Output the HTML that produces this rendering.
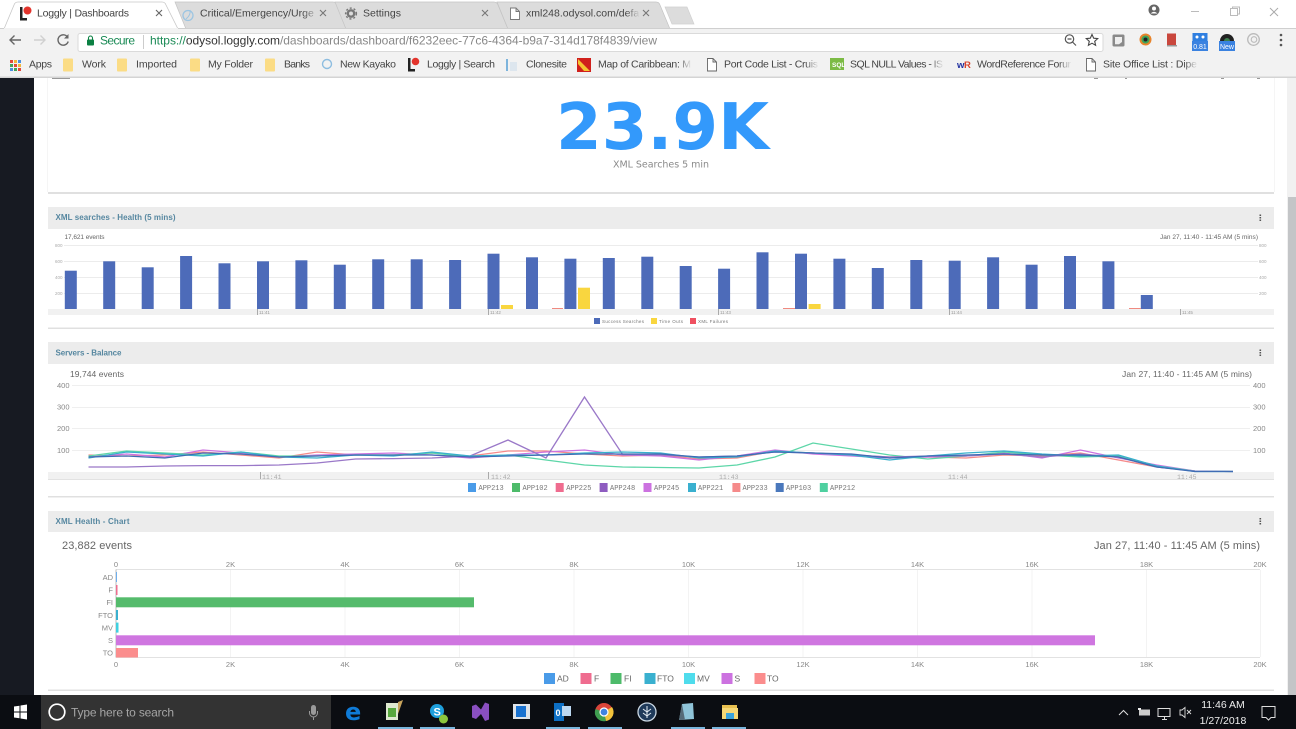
<!DOCTYPE html>
<html><head><meta charset="utf-8"><title>Loggly | Dashboards</title>
<style>
html,body{margin:0;padding:0;background:#fff;width:1296px;height:729px;overflow:hidden}
svg{display:block;filter:blur(.35px)}
text{font-family:"Liberation Sans",sans-serif}
.b text{font-size:10.5px;fill:#444}
.t{font-size:10.5px;fill:#444}
.h{font-size:8px;fill:#5687a0;font-weight:bold}
.s{font-size:6.5px;fill:#aaa;font-family:"Liberation Mono",monospace}
.m{font-size:7px;fill:#777;font-family:"Liberation Mono",monospace}
.a{font-size:7.5px;fill:#888}
.u{font-size:12px}
.l{fill:none;stroke-width:1.300}
</style></head><body>
<svg xmlns="http://www.w3.org/2000/svg" width="1296" height="729" viewBox="0 0 1296 729">
<defs>
<linearGradient id="fade" x1="0" x2="1"><stop offset="0" stop-color="#dcdcdc" stop-opacity="0"/><stop offset="1" stop-color="#dcdcdc"/></linearGradient>
<linearGradient id="fadew" x1="0" x2="1"><stop offset="0" stop-color="#f2f2f2" stop-opacity="0"/><stop offset="1" stop-color="#f2f2f2"/></linearGradient>
</defs>
<rect width="1296" height="729" fill="#fff"/>

<!-- page -->
<rect x="0" y="78" width="34" height="617" fill="#171a22"/>
<rect x="1287" y="78" width="9" height="617" fill="#f1f1f1"/>
<rect x="1288" y="197" width="8" height="498" fill="#c3c5c7"/>

<!-- card 1 -->
<rect x="48" y="192" width="1226" height="2" fill="#e0e0e0"/>
<line x1="47.500" y1="78" x2="47.500" y2="192" stroke="#f5f5f5"/>
<line x1="1274.500" y1="78" x2="1274.500" y2="192" stroke="#f5f5f5"/>
<g fill="#999"><rect x="52" y="78" width="18" height="1"/><rect x="1094" y="78" width="4" height="1"/><rect x="1125" y="78" width="2" height="1"/><rect x="1221" y="78" width="3" height="1"/><rect x="1257" y="78" width="3" height="1"/></g>
<text x="662.500" y="149" text-anchor="middle" style="font-family:'DejaVu Sans',sans-serif;font-weight:bold;font-size:64px" fill="#3399fb" textLength="213" lengthAdjust="spacingAndGlyphs">23.9K</text>
<text x="661" y="167.500" text-anchor="middle" style="font-family:'DejaVu Sans',sans-serif;font-size:9.500px" fill="#8a8a8a" textLength="96">XML Searches 5 min</text>

<!-- card 2 -->
<rect x="48" y="207" width="1226" height="22" fill="#ececec"/>
<rect x="48" y="327.500" width="1226" height="1.500" fill="#e0e0e0"/>
<text x="55.500" y="220" class="h" textLength="120">XML searches - Health (5 mins)</text>
<rect x="1259.500" y="214.500" width="1.600" height="1.500" fill="#555"/><rect x="1259.500" y="217" width="1.600" height="1.500" fill="#555"/><rect x="1259.500" y="219.500" width="1.600" height="1.500" fill="#555"/>
<text x="64.500" y="239" style="font-size:6.500px" fill="#666" textLength="40">17,621 events</text>
<text x="1160" y="239" style="font-size:6.500px" fill="#666" textLength="98">Jan 27, 11:40 - 11:45 AM  (5 mins)</text>
<g stroke="#ececec"><line x1="64" y1="245.500" x2="1258" y2="245.500"/><line x1="64" y1="261.500" x2="1258" y2="261.500"/><line x1="64" y1="277.500" x2="1258" y2="277.500"/><line x1="64" y1="293.500" x2="1258" y2="293.500"/></g>
<g fill="#aaa">
<text x="55" y="247" style="font-size:4.500px">800</text><text x="55" y="263" style="font-size:4.500px">600</text><text x="55" y="279" style="font-size:4.500px">400</text><text x="55" y="295" style="font-size:4.500px">200</text>
<text x="1259" y="247" style="font-size:4.500px">800</text><text x="1259" y="263" style="font-size:4.500px">600</text><text x="1259" y="279" style="font-size:4.500px">400</text><text x="1259" y="295" style="font-size:4.500px">200</text>
</g>
<rect x="48" y="309" width="1226" height="6" fill="#f1f1f1"/>
<g stroke="#aaa"><line x1="257.500" y1="309" x2="257.500" y2="315"/><line x1="488.500" y1="309" x2="488.500" y2="315"/><line x1="718.500" y1="309" x2="718.500" y2="315"/><line x1="949.500" y1="309" x2="949.500" y2="315"/><line x1="1180.500" y1="309" x2="1180.500" y2="315"/></g>
<g fill="#999"><text x="259" y="314" style="font-size:4.500px">11:41</text><text x="490" y="314" style="font-size:4.500px">11:42</text><text x="720" y="314" style="font-size:4.500px">11:43</text><text x="951" y="314" style="font-size:4.500px">11:44</text><text x="1182" y="314" style="font-size:4.500px">11:45</text></g>
<g fill="#4d6bb9">
<rect x="64.800" y="270.700" width="12" height="38.300"/><rect x="103.200" y="261.300" width="12" height="47.700"/><rect x="141.700" y="267.300" width="12" height="41.700"/><rect x="180.100" y="256" width="12" height="53"/><rect x="218.500" y="263.300" width="12" height="45.700"/><rect x="257" y="261.300" width="12" height="47.700"/><rect x="295.400" y="260.300" width="12" height="48.700"/><rect x="333.800" y="264.700" width="12" height="44.300"/><rect x="372.200" y="259.300" width="12" height="49.700"/><rect x="410.700" y="259.300" width="12" height="49.700"/><rect x="449.100" y="260" width="12" height="49"/><rect x="487.500" y="253.700" width="12" height="55.300"/><rect x="526" y="257.300" width="12" height="51.700"/><rect x="564.400" y="258.700" width="12" height="50.300"/><rect x="602.800" y="258" width="12" height="51"/><rect x="641.300" y="256.700" width="12" height="52.300"/><rect x="679.700" y="266" width="12" height="43"/><rect x="718.100" y="268.700" width="12" height="40.300"/><rect x="756.500" y="252.300" width="12" height="56.700"/><rect x="795" y="253.700" width="12" height="55.300"/><rect x="833.400" y="258.700" width="12" height="50.300"/><rect x="871.800" y="268" width="12" height="41"/><rect x="910.300" y="260" width="12" height="49"/><rect x="948.700" y="260.700" width="12" height="48.300"/><rect x="987.100" y="257.300" width="12" height="51.700"/><rect x="1025.600" y="264.700" width="12" height="44.300"/><rect x="1064" y="256" width="12" height="53"/><rect x="1102.400" y="261.300" width="12" height="47.700"/><rect x="1140.800" y="295" width="12" height="14"/>
</g>
<g fill="#f9d63f"><rect x="501" y="305" width="12" height="4"/><rect x="578" y="287.700" width="12" height="21.300"/><rect x="808.600" y="304" width="12" height="5"/></g>
<g fill="#f08a80"><rect x="552" y="308" width="11" height="1"/><rect x="783" y="308" width="12" height="1"/><rect x="1129" y="308" width="12" height="1"/></g>
<rect x="594" y="318" width="6" height="6" fill="#4d6bb9"/><text x="602" y="323" style="font-size:4.500px" fill="#777" textLength="42">Success Searches</text>
<rect x="651" y="318" width="6" height="6" fill="#f9d63f"/><text x="659" y="323" style="font-size:4.500px" fill="#777" textLength="24">Time Outs</text>
<rect x="690" y="318" width="6" height="6" fill="#ef5060"/><text x="698" y="323" style="font-size:4.500px" fill="#777" textLength="30">XML Failures</text>

<!-- card 3 -->
<rect x="48" y="342" width="1226" height="22" fill="#ececec"/>
<rect x="48" y="496" width="1226" height="1.500" fill="#e0e0e0"/>
<text x="55.500" y="355.500" class="h" textLength="66">Servers - Balance</text>
<rect x="1259.500" y="349.500" width="1.600" height="1.500" fill="#555"/><rect x="1259.500" y="352" width="1.600" height="1.500" fill="#555"/><rect x="1259.500" y="354.500" width="1.600" height="1.500" fill="#555"/>
<text x="70" y="377" style="font-size:8.500px" fill="#666" textLength="54">19,744 events</text>
<text x="1122" y="377" style="font-size:8.500px" fill="#666" textLength="130">Jan 27, 11:40 - 11:45 AM  (5 mins)</text>
<g stroke="#efefef"><line x1="72" y1="385.500" x2="1250" y2="385.500"/><line x1="72" y1="407.500" x2="1250" y2="407.500"/><line x1="72" y1="428.500" x2="1250" y2="428.500"/><line x1="72" y1="450.500" x2="1250" y2="450.500"/></g>
<g><text x="57" y="388" class="a">400</text><text x="57" y="409.500" class="a">300</text><text x="57" y="431" class="a">200</text><text x="57" y="453" class="a">100</text>
<text x="1253" y="388" class="a">400</text><text x="1253" y="409.500" class="a">300</text><text x="1253" y="431" class="a">200</text><text x="1253" y="453" class="a">100</text></g>
<rect x="48" y="472" width="1226" height="7.500" fill="#f1f1f1"/>
<g stroke="#aaa"><line x1="260.500" y1="472" x2="260.500" y2="480"/><line x1="488.500" y1="472" x2="488.500" y2="480"/></g>
<g><text x="262" y="479" class="s">11:41</text><text x="491" y="479" class="s">11:42</text><text x="719" y="479" class="s">11:43</text><text x="948" y="479" class="s">11:44</text><text x="1177" y="479" class="s">11:45</text></g>
<line x1="48" y1="479.500" x2="1274" y2="479.500" stroke="#e2e2e2"/>

<polyline class="l" stroke="#f58a8a" points="88.500,455 126.600,456 164.800,455 203,452 241,455 279,458 317,452 355.500,455 393.700,455 432,453 470,456 508,451 546,451 584.500,454 622.600,456 660.700,455 699,459 737,458 775,451 813,453 851.500,455 889.600,457 927.800,457 966,458 1004,455 1042,456 1080.400,453 1118.500,460 1156.700,467 1194.800,471 1233,471.500"/>
<polyline class="l" stroke="#cc72e0" points="88.500,457 126.600,454 164.800,457 203,450 241,453 279,457 317,455 355.500,454 393.700,453 432,455 470,458 508,455 546,452 584.500,450 622.600,455 660.700,456 699,460 737,456 775,450 813,454 851.500,456 889.600,458 927.800,457 966,456 1004,453 1042,458 1080.400,450 1118.500,458 1156.700,465 1194.800,471 1233,471.500"/>
<polyline class="l" stroke="#5dd6a8" points="88.500,456 126.600,451 164.800,453 203,455 241,452 279,456 317,456 355.500,455 393.700,455 432,453 470,457 508,455 546,460 584.500,465 622.600,467 660.700,467.500 699,468 737,465 775,457 813,443 851.500,449 889.600,455 927.800,459 966,456 1004,452 1042,455 1080.400,457 1118.500,456 1156.700,466 1194.800,471 1233,471.500"/>
<polyline class="l" stroke="#9a78c8" points="88.500,467 126.600,467 164.800,466 203,465.600 241,465.600 279,465 317,463 355.500,459 393.700,458.600 432,458 470,456 508,440 546,458 584.500,397 622.600,454.500 660.700,455 699,457 737,456 775,452 813,453 851.500,455 889.600,457 927.800,456 966,456 1004,454 1042,457 1080.400,454 1118.500,457 1156.700,467 1194.800,471 1233,471.500"/>
<polyline class="l" stroke="#38b0cc" points="88.500,458 126.600,452 164.800,454 203,456 241,452 279,457 317,458 355.500,455 393.700,456 432,452 470,456 508,455 546,455 584.500,453 622.600,452 660.700,453 699,458 737,457 775,451 813,453 851.500,455 889.600,460 927.800,456 966,453 1004,451 1042,454 1080.400,456 1118.500,455 1156.700,466 1194.800,471.500 1233,471.500"/>
<polyline class="l" stroke="#3f6cb4" points="88.500,457 126.600,456 164.800,458 203,453 241,454 279,457 317,456 355.500,455 393.700,455 432,455 470,457 508,456 546,455 584.500,454 622.600,454 660.700,454 699,457 737,456 775,452 813,453 851.500,454 889.600,458 927.800,456 966,455 1004,454 1042,455 1080.400,455 1118.500,457 1156.700,467 1194.800,471.500 1233,471.500"/>

<g>
<rect x="468" y="483" width="8" height="9" fill="#4a9be8"/><text x="478.500" y="490" class="m">APP213</text>
<rect x="512" y="483" width="8" height="9" fill="#4dbb6a"/><text x="522.500" y="490" class="m">APP102</text>
<rect x="555.700" y="483" width="8" height="9" fill="#ef6c8f"/><text x="566.200" y="490" class="m">APP225</text>
<rect x="599.600" y="483" width="8" height="9" fill="#8e5cc0"/><text x="610" y="490" class="m">APP248</text>
<rect x="643.500" y="483" width="8" height="9" fill="#cc72e0"/><text x="654" y="490" class="m">APP245</text>
<rect x="688" y="483" width="8" height="9" fill="#3ab0cf"/><text x="698" y="490" class="m">APP221</text>
<rect x="732.400" y="483" width="8" height="9" fill="#f58a8a"/><text x="742.500" y="490" class="m">APP233</text>
<rect x="775.700" y="483" width="8" height="9" fill="#4a78bc"/><text x="786" y="490" class="m">APP103</text>
<rect x="819.800" y="483" width="8" height="9" fill="#4fd0a0"/><text x="830" y="490" class="m">APP212</text>
</g>

<!-- card 4 -->
<rect x="48" y="511" width="1226" height="21" fill="#ececec"/>
<rect x="48" y="689.500" width="1226" height="1.500" fill="#e0e0e0"/>
<text x="55.500" y="524" class="h" textLength="74">XML Health - Chart</text>
<rect x="1259.500" y="518" width="1.600" height="1.500" fill="#555"/><rect x="1259.500" y="520.500" width="1.600" height="1.500" fill="#555"/><rect x="1259.500" y="523" width="1.600" height="1.500" fill="#555"/>
<text x="62" y="549" style="font-size:11px" fill="#666" textLength="70">23,882 events</text>
<text x="1094" y="549" style="font-size:11px" fill="#666" textLength="166">Jan 27, 11:40 - 11:45 AM  (5 mins)</text>
<g stroke="#f3f3f3"><line x1="230.500" y1="570" x2="230.500" y2="657"/><line x1="345" y1="570" x2="345" y2="657"/><line x1="459.500" y1="570" x2="459.500" y2="657"/><line x1="574" y1="570" x2="574" y2="657"/><line x1="688.500" y1="570" x2="688.500" y2="657"/><line x1="803" y1="570" x2="803" y2="657"/><line x1="917.500" y1="570" x2="917.500" y2="657"/><line x1="1032" y1="570" x2="1032" y2="657"/><line x1="1146.500" y1="570" x2="1146.500" y2="657"/><line x1="1260.500" y1="570" x2="1260.500" y2="657"/></g>
<line x1="116" y1="569.500" x2="1260" y2="569.500" stroke="#e2e2e2"/>
<line x1="116" y1="657.500" x2="1260" y2="657.500" stroke="#e2e2e2"/>
<line x1="116" y1="569.500" x2="116" y2="657.500" stroke="#bbb"/>
<g>
<text x="116" y="567" class="a" text-anchor="middle">0</text><text x="230.500" y="567" class="a" text-anchor="middle">2K</text><text x="345" y="567" class="a" text-anchor="middle">4K</text><text x="459.500" y="567" class="a" text-anchor="middle">6K</text><text x="574" y="567" class="a" text-anchor="middle">8K</text><text x="688.500" y="567" class="a" text-anchor="middle">10K</text><text x="803" y="567" class="a" text-anchor="middle">12K</text><text x="917.500" y="567" class="a" text-anchor="middle">14K</text><text x="1032" y="567" class="a" text-anchor="middle">16K</text><text x="1146.500" y="567" class="a" text-anchor="middle">18K</text><text x="1260" y="567" class="a" text-anchor="middle">20K</text>
<text x="116" y="667" class="a" text-anchor="middle">0</text><text x="230.500" y="667" class="a" text-anchor="middle">2K</text><text x="345" y="667" class="a" text-anchor="middle">4K</text><text x="459.500" y="667" class="a" text-anchor="middle">6K</text><text x="574" y="667" class="a" text-anchor="middle">8K</text><text x="688.500" y="667" class="a" text-anchor="middle">10K</text><text x="803" y="667" class="a" text-anchor="middle">12K</text><text x="917.500" y="667" class="a" text-anchor="middle">14K</text><text x="1032" y="667" class="a" text-anchor="middle">16K</text><text x="1146.500" y="667" class="a" text-anchor="middle">18K</text><text x="1260" y="667" class="a" text-anchor="middle">20K</text>
</g>
<text x="113" y="580" class="a" text-anchor="end">AD</text><text x="113" y="592.500" class="a" text-anchor="end">F</text><text x="113" y="605" class="a" text-anchor="end">FI</text><text x="113" y="618" class="a" text-anchor="end">FTO</text><text x="113" y="630.500" class="a" text-anchor="end">MV</text><text x="113" y="643" class="a" text-anchor="end">S</text><text x="113" y="655.500" class="a" text-anchor="end">TO</text>
<rect x="116" y="572" width="0.800" height="10" fill="#4a9be8"/>
<rect x="116" y="585" width="1.500" height="10" fill="#ef6c8f"/>
<rect x="116" y="597.300" width="358" height="10" fill="#55bb6c"/>
<rect x="116" y="610" width="2" height="10" fill="#3ab0cf"/>
<rect x="116" y="622.600" width="2.500" height="10" fill="#3fd0e0"/>
<rect x="116" y="635.300" width="979" height="10" fill="#cf76e0"/>
<rect x="116" y="648" width="22" height="9.500" fill="#fb8d8d"/>
<rect x="544" y="673" width="11" height="11" fill="#4a9be8"/><text x="557" y="681.500" style="font-size:8.500px" fill="#666">AD</text>
<rect x="580.500" y="673" width="11" height="11" fill="#ef6c8f"/><text x="594" y="681.500" style="font-size:8.500px" fill="#666">F</text>
<rect x="610.500" y="673" width="11" height="11" fill="#4dbb6a"/><text x="624" y="681.500" style="font-size:8.500px" fill="#666">FI</text>
<rect x="644.500" y="673" width="11" height="11" fill="#3ab0cf"/><text x="657" y="681.500" style="font-size:8.500px" fill="#666">FTO</text>
<rect x="684" y="673" width="11" height="11" fill="#4fdcec"/><text x="697" y="681.500" style="font-size:8.500px" fill="#666">MV</text>
<rect x="721.500" y="673" width="11" height="11" fill="#cc72e0"/><text x="734.500" y="681.500" style="font-size:8.500px" fill="#666">S</text>
<rect x="754.500" y="673" width="11" height="11" fill="#fb8d8d"/><text x="767" y="681.500" style="font-size:8.500px" fill="#666">TO</text>

<!-- chrome -->
<rect x="0" y="0" width="1296" height="28" fill="#fff"/>
<path d="M175 2 L333 2 Q336 2 337 5 L347 29 L186 29Z" fill="#dcdcdc" stroke="#c4c4c4" stroke-width=".7"/>
<path d="M335 2 L494 2 Q497 2 498 5 L508 29 L346 29Z" fill="#dcdcdc" stroke="#c4c4c4" stroke-width=".7"/>
<path d="M497 2 L656 2 Q659 2 660 5 L670 29 L508 29Z" fill="#dcdcdc" stroke="#c4c4c4" stroke-width=".7"/>
<path d="M665 7 L687 7 L694 24 L672 24Z" fill="#dcdcdc" stroke="#d0d0d0" stroke-width=".7"/>
<path d="M4 29 L14 5 Q15 2 18 2 L162 2 Q165 2 166 5 L178 29Z" fill="#fff" stroke="#c8c8c8" stroke-width=".8"/>
<rect x="0" y="28" width="1296" height="50" fill="#f2f2f2"/>
<rect x="178" y="28" width="1118" height="1" fill="#cfcfcf"/>
<rect x="0" y="28" width="4" height="1" fill="#cfcfcf"/>
<rect x="0" y="76.500" width="1296" height="1.500" fill="#d4d4d4"/>

<!-- tab content -->
<rect x="20" y="7" width="2.500" height="13" fill="#222"/><rect x="20" y="18" width="7" height="2.500" fill="#222"/><circle cx="27.500" cy="10.500" r="4" fill="#e3342c"/>
<text x="37" y="16.500" class="t" textLength="92">Loggly | Dashboards</text>
<path d="M156 10 l6 6 m0 -6 l-6 6" stroke="#666" stroke-width="1.100"/>
<circle cx="188" cy="15.500" r="5" fill="none" stroke="#9cc5e2" stroke-width="1.300"/><path d="M186 19 Q191 15 190 10" fill="none" stroke="#9cc5e2"/>
<text x="200" y="16.500" class="t" fill="#555">Critical/Emergency/Urge</text>
<rect x="302" y="5" width="18" height="18" fill="url(#fade)"/>
<path d="M320 10 l6 6 m0 -6 l-6 6" stroke="#777" stroke-width="1.100"/>
<circle cx="351" cy="13.500" r="3.200" fill="none" stroke="#777" stroke-width="2.400"/><circle cx="351" cy="13.500" r="5.400" fill="none" stroke="#777" stroke-width="1.400" stroke-dasharray="2 2"/>
<text x="363" y="16.500" class="t" fill="#555">Settings</text>
<path d="M482 10 l6 6 m0 -6 l-6 6" stroke="#777" stroke-width="1.100"/>
<path d="M510.500 8 h5.500 l3.500 3.500 v8 h-9z M516 8 v3.500 h3.500" fill="#fff" stroke="#777" stroke-width=".9"/>
<text x="526" y="16.500" class="t" fill="#555">xml248.odysol.com/defa</text>
<rect x="626" y="5" width="14" height="18" fill="url(#fade)"/>
<path d="M643 10 l6 6 m0 -6 l-6 6" stroke="#777" stroke-width="1.100"/>

<!-- window controls -->
<circle cx="1154" cy="10" r="5.500" fill="#666"/><circle cx="1154" cy="8.500" r="2" fill="#fff"/><path d="M1150.500 13.500 q3.500 -3.500 7 0" fill="#fff"/>
<line x1="1191" y1="11.500" x2="1199" y2="11.500" stroke="#bbb"/>
<rect x="1230.500" y="8.500" width="7" height="7" fill="none" stroke="#bbb"/><path d="M1232.500 8.500 v-1.500 h7 v7 h-2" fill="none" stroke="#bbb"/>
<path d="M1270 8 l8 8 m0 -8 l-8 8" stroke="#aaa"/>

<!-- toolbar -->
<path d="M21 40 H10 M14.500 35.500 L10 40 L14.500 44.500" fill="none" stroke="#666" stroke-width="1.400"/>
<path d="M34 40 H45 M40.500 35.500 L45 40 L40.500 44.500" fill="none" stroke="#d0d0d0" stroke-width="1.400"/>
<path d="M67.500 37 A5.200 5.200 0 1 0 68.200 41.500" fill="none" stroke="#666" stroke-width="1.400"/><path d="M68.500 34 v4.500 h-4.500z" fill="#666"/>
<rect x="78" y="33.500" width="1025" height="18" rx="2" fill="#fff" stroke="#dadada"/>
<rect x="87" y="39.500" width="7" height="6" rx="1" fill="#0b8043"/><path d="M88.500 39.500 v-1.500 a2 2 0 0 1 4 0 v1.500" fill="none" stroke="#0b8043" stroke-width="1.100"/>
<text x="100" y="44.500" class="u" fill="#1a8a55" textLength="35">Secure</text>
<line x1="143.500" y1="35" x2="143.500" y2="49" stroke="#ccc"/>
<text x="150" y="44.500" class="u" textLength="507"><tspan fill="#1a8a55">https://</tspan><tspan fill="#333">odysol.loggly.com</tspan><tspan fill="#888">/dashboards/dashboard/f6232eec-77c6-4364-b9a7-314d178f4839/view</tspan></text>
<circle cx="1069.500" cy="39" r="4.200" fill="none" stroke="#555" stroke-width="1.200"/><path d="M1072.500 42 l3.500 3.500 M1067.500 39 h4" stroke="#555" stroke-width="1.200"/>
<path d="M1092 34.500 l1.700 3.700 4 .4 -3 2.700 .9 4 -3.600 -2.100 -3.600 2.100 .9 -4 -3 -2.700 4 -.4z" fill="#fff" stroke="#444" stroke-width="1.100"/>
<rect x="1112.500" y="34.500" width="12" height="12" rx="1.500" fill="#8a8a8a"/><path d="M1115 37 h7 v5 l-3 2.200 h-4z" fill="#efefef"/>
<circle cx="1145.500" cy="39.500" r="6" fill="#e8842c"/><circle cx="1145.500" cy="39.500" r="4" fill="#3da55a"/><circle cx="1145.500" cy="39.500" r="2" fill="#222"/>
<rect x="1167" y="33.500" width="9" height="12" fill="#c9473d"/><rect x="1167" y="45" width="10" height="1.500" fill="#999"/>
<rect x="1192.500" y="33" width="15" height="8" fill="#2f7fe0"/><circle cx="1197" cy="37" r="1.500" fill="#fff"/><circle cx="1203" cy="37" r="1.500" fill="#fff"/>
<rect x="1192" y="41" width="16" height="10" fill="#3a82e0"/><text x="1200" y="49" text-anchor="middle" style="font-size:7px" fill="#fff">0.81</text>
<path d="M1220 41 a7 7 0 0 1 14 0z" fill="#222"/><path d="M1224 41 a3 3 0 0 1 6 0z" fill="#3d7f4f"/>
<rect x="1219" y="41" width="16" height="10" fill="#3a82e0"/><text x="1227" y="49" text-anchor="middle" style="font-size:7px" fill="#fff">New</text>
<circle cx="1253.500" cy="39.500" r="5.800" fill="none" stroke="#bbb" stroke-width="1.300"/><circle cx="1254" cy="39.500" r="2.800" fill="none" stroke="#bbb" stroke-width="1.100"/>
<circle cx="1281" cy="35" r="1.300" fill="#555"/><circle cx="1281" cy="40" r="1.300" fill="#555"/><circle cx="1281" cy="45" r="1.300" fill="#555"/>

<!-- bookmarks -->
<rect x="10" y="60" width="3" height="3" fill="#e1483a"/><rect x="14" y="60" width="3" height="3" fill="#f1b73c"/><rect x="18" y="60" width="3" height="3" fill="#4a8fe0"/>
<rect x="10" y="64" width="3" height="3" fill="#44a35a"/><rect x="14" y="64" width="3" height="3" fill="#e1483a"/><rect x="18" y="64" width="3" height="3" fill="#f1b73c"/>
<rect x="10" y="68" width="3" height="3" fill="#4a8fe0"/><rect x="14" y="68" width="3" height="3" fill="#44a35a"/><rect x="18" y="68" width="3" height="3" fill="#e1483a"/>
<g fill="#fbdc85"><rect x="63" y="58.500" width="10" height="13" rx="1"/><rect x="117" y="58.500" width="10" height="13" rx="1"/><rect x="190" y="58.500" width="10" height="13" rx="1"/><rect x="265" y="58.500" width="10" height="13" rx="1"/></g>
<circle cx="327" cy="64" r="4.500" fill="none" stroke="#8dbde0" stroke-width="1.400"/>
<rect x="408" y="58" width="2.500" height="13" fill="#222"/><rect x="408" y="69" width="7" height="2.500" fill="#222"/><circle cx="415.500" cy="61.500" r="3.800" fill="#e3342c"/>
<rect x="506" y="59" width="2" height="12" fill="#7db4dc"/><rect x="510" y="62" width="7" height="9" fill="#dde6ee"/>
<rect x="577" y="58" width="14" height="14" fill="#d0201c"/><path d="M578 59 l12 12 h-6 l-6 -7z" fill="#f4c430"/>
<path d="M707.500 58.500 h5.500 l3.500 3.500 v9 h-9z M713 58.500 v3.500 h3.500" fill="#fff" stroke="#666" stroke-width=".9"/>
<rect x="830" y="58" width="14" height="12" fill="#7cbb45"/><text x="832" y="67" style="font-size:6.500px;font-weight:bold" fill="#fff">SQL</text>
<text x="957" y="68" style="font-size:9.500px;font-weight:bold" fill="#1f2fa0">w</text><text x="964" y="68" style="font-size:9.500px;font-weight:bold" fill="#d8442c">R</text>
<path d="M1086.500 58.500 h5.500 l3.500 3.500 v9 h-9z M1092 58.500 v3.500 h3.500" fill="#fff" stroke="#666" stroke-width=".9"/>
<g class="b">
<text x="29" y="67.500" textLength="23">Apps</text>
<text x="82" y="67.500" textLength="24">Work</text>
<text x="136" y="67.500" textLength="41">Imported</text>
<text x="208" y="67.500" textLength="45">My Folder</text>
<text x="284" y="67.500" textLength="26">Banks</text>
<text x="340" y="67.500" textLength="56">New Kayako</text>
<text x="427" y="67.500" textLength="68">Loggly | Search</text>
<text x="526" y="67.500" textLength="41">Clonesite</text>
<text x="598" y="67.500" textLength="93">Map of Caribbean: M</text>
<text x="724" y="67.500" textLength="94">Port Code List - Cruis</text>
<text x="850" y="67.500" textLength="93">SQL NULL Values - IS</text>
<text x="977" y="67.500" textLength="94">WordReference Forur</text>
<text x="1103" y="67.500" textLength="94">Site Office List : Dipe</text>
</g>
<rect x="678" y="56" width="14" height="17" fill="url(#fadew)"/>
<rect x="805" y="56" width="14" height="17" fill="url(#fadew)"/>
<rect x="930" y="56" width="14" height="17" fill="url(#fadew)"/>
<rect x="1058" y="56" width="14" height="17" fill="url(#fadew)"/>
<rect x="1184" y="56" width="14" height="17" fill="url(#fadew)"/>

<!-- taskbar -->
<rect x="0" y="695" width="1296" height="34" fill="#0b0d12"/>
<rect x="41" y="695" width="290" height="34" fill="#333"/>
<path d="M14 706.500 l5.500 -.8 v5.800 h-5.500z M20.500 705.500 l6.500 -1 v7 h-6.500z M14 712.500 h5.500 v5.800 l-5.500 -.8z M20.500 712.500 h6.500 v7 l-6.500 -1z" fill="#fff"/>
<circle cx="57" cy="712" r="7.800" fill="none" stroke="#fff" stroke-width="1.700"/>
<text x="71" y="716.500" style="font-size:12px" fill="#a5a5a5" textLength="103">Type here to search</text>
<rect x="311" y="705" width="5" height="10" rx="2.500" fill="#9a9a9a"/><path d="M309.500 711 v2 a4 4 0 0 0 8 0 v-2 M313.500 717 v3" fill="none" stroke="#9a9a9a"/>
<text x="345" y="720" style="font-family:'DejaVu Sans',sans-serif;font-size:24px;font-weight:bold" fill="#0f7bd8">e</text>
<path d="M386 703 h12 v17 h-12z" fill="#dfe9d0"/><path d="M388 708 h8 v9 h-8z" fill="#58a83e"/><path d="M398 702 l5 -2 -5 14z" fill="#c9a45c"/>
<circle cx="437" cy="711" r="7" fill="#1e9fdc"/><text x="433.500" y="715.500" style="font-size:11px;font-weight:bold" fill="#fff">S</text><circle cx="443.500" cy="719" r="4.500" fill="#8cc63e"/>
<path d="M472 706 l4 -1.500 5 5 4 -7 4 1.500 v15.500 l-4 1.500 -4 -7 -5 5 -4 -1.500z" fill="#8a4fc0"/>
<rect x="513" y="704" width="17" height="15" fill="#dfe3e8"/><rect x="516" y="706" width="10" height="11" fill="#1a72d0"/>
<rect x="554" y="703" width="10" height="18" fill="#0d6fc4"/><rect x="562" y="706" width="9" height="10" fill="#bcd8f2"/><text x="555.500" y="716" style="font-size:9px;font-weight:bold" fill="#fff">0</text>
<circle cx="604" cy="712" r="9" fill="#d9443a"/><path d="M604 712 L612 707 A9 9 0 0 1 606 721z" fill="#f3c33b"/><path d="M604 712 L606 721 A9 9 0 0 1 595.500 709z" fill="#3f9e50"/><circle cx="604" cy="712" r="4" fill="#3e83e0" stroke="#fff" stroke-width="1.200"/>
<circle cx="647" cy="712" r="9" fill="#1f3a5a" stroke="#c9d6e2" stroke-width="1.300"/><path d="M647 706 v12 M643 709 l4 3 4 -3 M643 713 l4 3 4 -3" stroke="#e6eef5" fill="none"/>
<path d="M682 704 l11 -1 1 16 -15 1z" fill="#8fc3d8"/><path d="M682 704 l-3 16 6 0z" fill="#566a78"/>
<path d="M722 705 h15 v3 h-15z" fill="#e8c050"/><path d="M722 708 h16 v11 h-16z" fill="#f6d876"/><rect x="726" y="713" width="8" height="6" fill="#3ba4dc"/>
<g fill="#79b5dc"><rect x="378" y="727" width="35" height="2"/><rect x="420" y="727" width="35" height="2"/><rect x="546" y="727" width="34" height="2"/><rect x="588" y="727" width="34" height="2"/><rect x="671" y="727" width="34" height="2"/><rect x="712" y="727" width="34" height="2"/></g>
<path d="M1119 715 l4.500 -4.500 4.500 4.500" fill="none" stroke="#ddd" stroke-width="1"/>
<rect x="1139" y="709.500" width="11" height="6" fill="#ccc"/><rect x="1138" y="708" width="3" height="2" fill="#eee"/>
<path d="M1158 708.500 h12 v8 h-12z M1162 719.500 h5 M1164.500 716.500 v3" fill="none" stroke="#ddd"/>
<path d="M1180 710 h2 l3 -2.500 v10 l-3 -2.500 h-2z M1187 710 l4 4 m0 -4 l-4 4" fill="none" stroke="#ddd" stroke-width=".9"/>
<text x="1223" y="708" text-anchor="middle" style="font-size:10.500px" fill="#eee">11:46 AM</text>
<text x="1223" y="724" text-anchor="middle" style="font-size:10.500px" fill="#eee">1/27/2018</text>
<path d="M1262 706.500 h13 v11 h-4 l-2.500 2.500 -2.500 -2.500 h-4z" fill="none" stroke="#ddd"/>
</svg>
</body></html>
